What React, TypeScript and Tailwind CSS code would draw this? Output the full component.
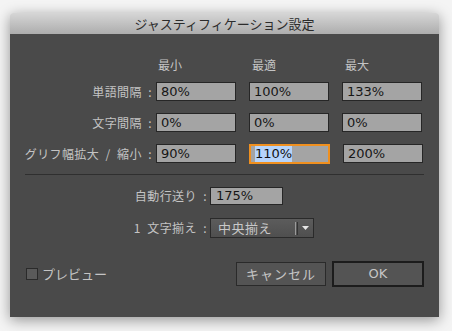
const jp = { fontFamily: '"Noto Sans CJK JP", "Noto Sans", sans-serif' };
const num = { fontFamily: '"DejaVu Sans", "Noto Sans CJK JP", sans-serif' };

const rows = [
  { label: "単語間隔\u2002:", values: ["80%", "100%", "133%"] },
  { label: "文字間隔\u2002:", values: ["0%", "0%", "0%"] },
  { label: "グリフ幅拡大\u2002/\u2002縮小\u2002:", values: ["90%", "110%", "200%"] },
];

function Field({ value, focused }: { value: string; focused?: boolean }) {
  if (focused) {
    return (
      <div className="ml-[13px] flex h-[20px] w-[81px] items-center border-2 border-[#f0901f] bg-[#a4a4a4] pl-[4px]">
        <span style={num} className="bg-[#b6d4fb] text-[13px] leading-[16px] text-[#111]">
          {value}
        </span>
      </div>
    );
  }
  return (
    <div
      style={num}
      className="ml-[13px] flex h-[19px] w-[80px] items-center border border-[#262626] bg-[#a4a4a4] pl-[4px] text-[13px] text-[#161616] first:ml-0"
    >
      {value}
    </div>
  );
}

export default function App() {
  return (
    <div className="h-[331px] w-[452px] overflow-hidden bg-[#f4f4f4] pl-[10px] pt-[13px]">
      <div className="w-[429px] rounded-t-[3px] shadow-[0_3px_14px_rgba(0,0,0,0.4)]">
        {/* title bar */}
        <div
          style={jp}
          className="flex h-[21px] items-center justify-center rounded-t-[3px] bg-gradient-to-b from-[#d6d6d6] to-[#adadad] text-[13px] text-[#2c2c2c]"
        >
          ジャスティフィケーション設定
        </div>

        <div style={jp} className="flex h-[283px] flex-col bg-[#4a4a4a] text-[12px] text-[#c4c4c4]">
          {/* column headers */}
          <div className="mt-[22px] flex h-[18px] items-center">
            <div className="w-[146px]" />
            <div className="w-[80px] pl-[2px]">最小</div>
            <div className="ml-[13px] w-[80px] pl-[3px]">最適</div>
            <div className="ml-[13px] w-[80px] pl-[3px]">最大</div>
          </div>

          <div className="mt-[8px] flex flex-col gap-[12px]">
            {rows.map((r, i) => (
              <div key={i} className="flex h-[19px] items-center">
                <div className="w-[146px] whitespace-nowrap pr-[4px] text-right tracking-[0.4px]">{r.label}</div>
                <div className="flex items-center">
                  {r.values.map((v, j) => (
                    <Field key={j} value={v} focused={i === 2 && j === 1} />
                  ))}
                </div>
              </div>
            ))}
          </div>

          {/* separator */}
          <div className="ml-[15px] mt-[11px] h-px w-[399px] bg-[#2f2f2f]" />

          <div className="mt-[12px] flex h-[18px] items-center">
            <div className="w-[197px] whitespace-nowrap text-right tracking-[0.4px]">自動行送り{"\u2002"}:</div>
            <div
              style={num}
              className="ml-[3px] flex h-[18px] w-[73px] items-center border border-[#262626] bg-[#a4a4a4] pl-[5px] text-[13px] text-[#161616]"
            >
              175%
            </div>
          </div>

          <div className="mt-[13px] flex h-[20px] items-center">
            <div className="w-[197px] whitespace-nowrap text-right tracking-[0.4px]">1{"\u2002"}文字揃え{"\u2002"}:</div>
            <div className="ml-[3px] flex h-[20px] w-[104px] items-center border border-[#2a2a2a] bg-gradient-to-b from-[#5c5c5c] to-[#4f4f4f]">
              <span className="flex-1 pl-[7px] text-[13px] tracking-[0.5px] text-[#c8c8c8]">中央揃え</span>
              <div className="h-[13px] w-px bg-[#9a9a9a]" />
              <div className="ml-px h-[13px] w-px bg-[#333]" />
              <svg width="14" height="8" viewBox="0 0 14 8" className="ml-[1px]">
                <path d="M3 2h7l-3.5 4z" fill="#e6e6e6" />
              </svg>
            </div>
          </div>

          {/* bottom */}
          <div className="mt-[23px] flex h-[26px] items-center pr-[15px]">
            <div className="ml-[16px] h-[12px] w-[12px] border border-[#2a2a2a] bg-[#5a5a5a]" />
            <span className="ml-[4px] text-[13px] text-[#c4c4c4]">プレビュー</span>
            <div className="flex-1" />
            <button className="h-[24px] w-[90px] border border-[#2a2a2a] bg-[#545454] text-[13px] tracking-[1px] text-[#c6c6c6]">
              キャンセル
            </button>
            <button
              style={{ fontFamily: '"DejaVu Sans", sans-serif' }}
              className="ml-[6px] h-[26px] w-[92px] border-2 border-[#1c1c1c] bg-[#545454] text-[13px] text-[#c6c6c6]"
            >
              OK
            </button>
          </div>
        </div>
      </div>
    </div>
  );
}
